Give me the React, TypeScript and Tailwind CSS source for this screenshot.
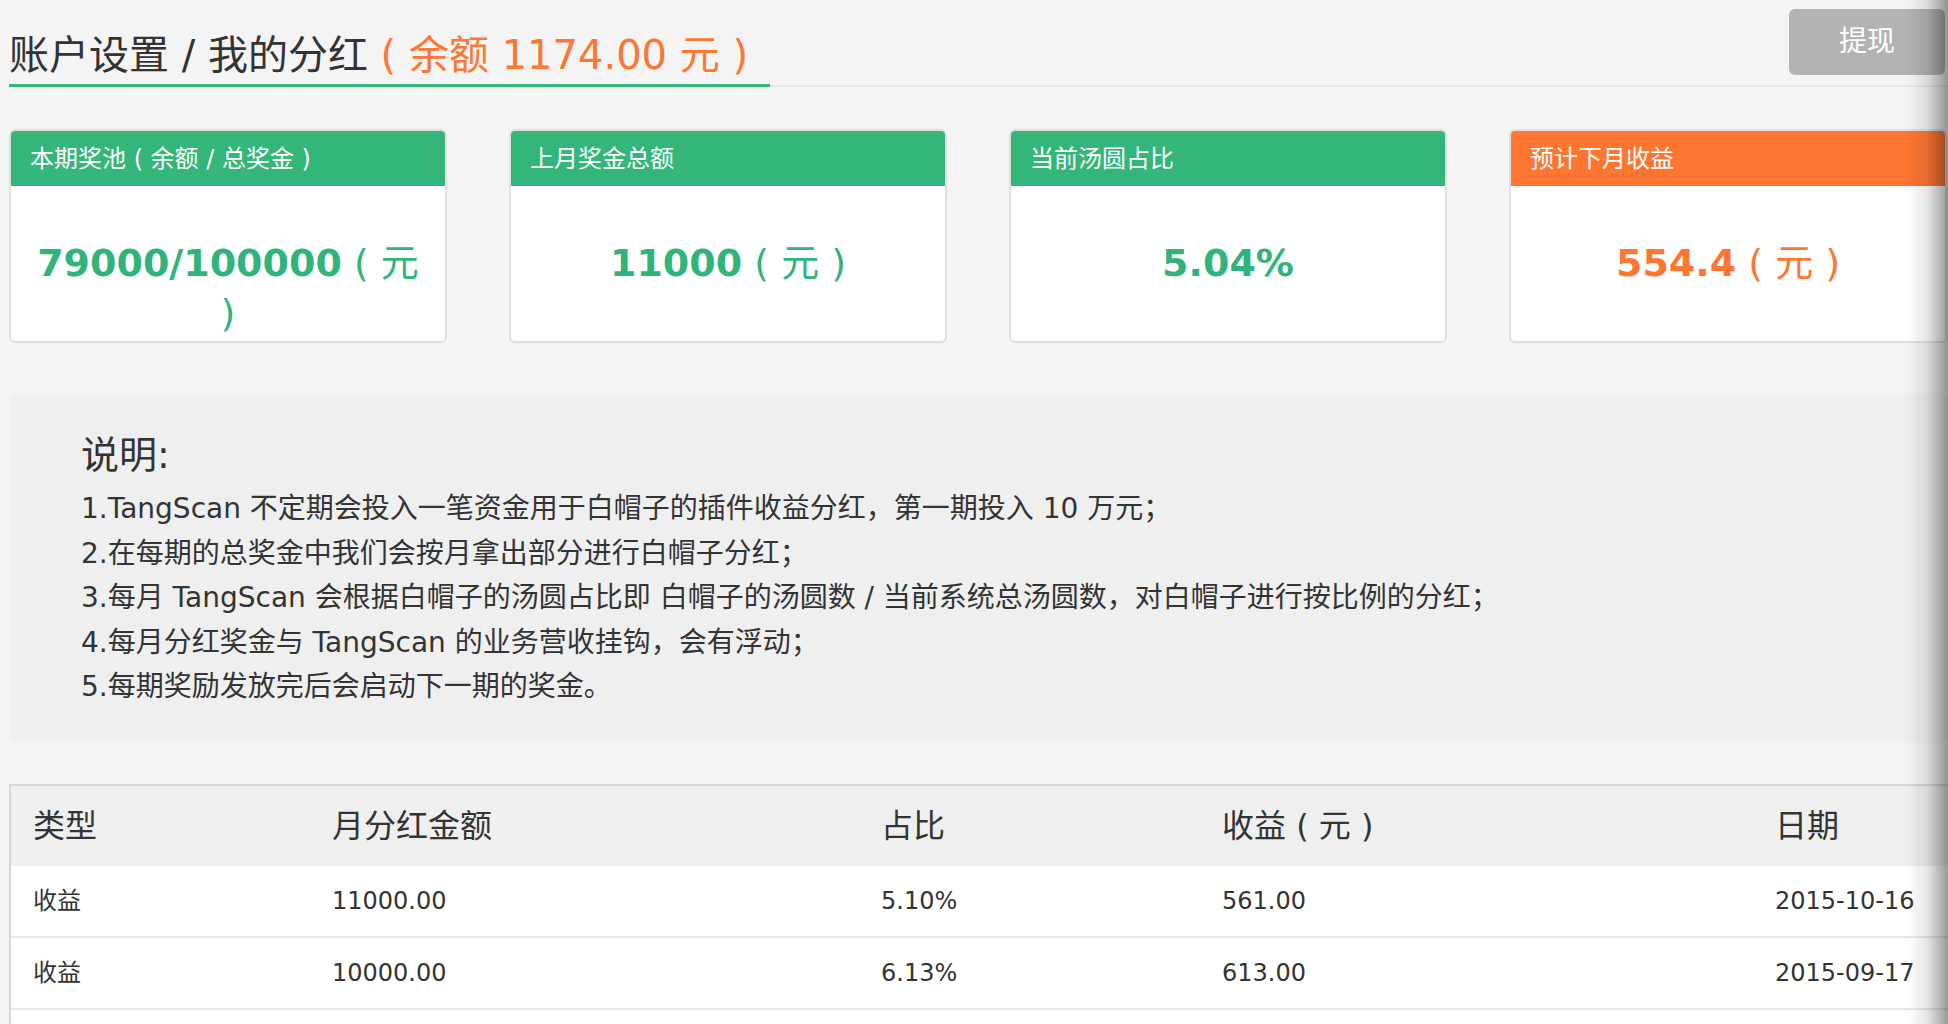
import React from "react";

const FONT = '"DejaVu Sans", "Noto Sans CJK SC", sans-serif';

type Stat = { title: string; value: string; unit?: boolean; tone: "green" | "orange" };

const stats: Stat[] = [
	{ title: "本期奖池 ( 余额 / 总奖金 )", value: "79000/100000", unit: true, tone: "green" },
	{ title: "上月奖金总额", value: "11000", unit: true, tone: "green" },
	{ title: "当前汤圆占比", value: "5.04%", tone: "green" },
	{ title: "预计下月收益", value: "554.4", unit: true, tone: "orange" },
];

const notes = [
	"1.TangScan 不定期会投入一笔资金用于白帽子的插件收益分红，第一期投入 10 万元；",
	"2.在每期的总奖金中我们会按月拿出部分进行白帽子分红；",
	"3.每月 TangScan 会根据白帽子的汤圆占比即 白帽子的汤圆数 / 当前系统总汤圆数，对白帽子进行按比例的分红；",
	"4.每月分红奖金与 TangScan 的业务营收挂钩，会有浮动；",
	"5.每期奖励发放完后会启动下一期的奖金。",
];

const rows = [
	{ type: "收益", amount: "11000.00", ratio: "5.10%", income: "561.00", date: "2015-10-16" },
	{ type: "收益", amount: "10000.00", ratio: "6.13%", income: "613.00", date: "2015-09-17" },
];

const gridCols = "grid grid-cols-[299px_549px_341px_553px_1fr]";

function StatCard({ title, value, unit, tone }: Stat) {
	const isGreen = tone === "green";
	return (
		<div className="w-[438px] h-[214px] shrink-0 rounded-[6px] border-2 border-[#e0e0e0] bg-white overflow-hidden">
			<div
				className={
					"h-[55px] flex items-center pl-[19px] text-[24px] text-white whitespace-pre " +
					(isGreen ? "bg-[#34b67b]" : "bg-[#fe7632]")
				}
			>
				{title}
			</div>
			<div
				className={
					"pt-[52px] px-[16px] text-center text-[38px] leading-[50px] font-bold " +
					(isGreen ? "text-[#31b47a]" : "text-[#fe7632]")
				}
			>
				{value}
				{unit && <span className="font-normal"> ( 元 )</span>}
			</div>
		</div>
	);
}

export default function App() {
	return (
		<div
			className="relative w-full min-h-screen bg-[#f4f4f4] text-[#333] overflow-hidden"
			style={{ fontFamily: FONT }}
		>
			<div className="pl-[9px]">
				{/* header */}
				<div className="flex items-start justify-between border-b-2 border-[#e6e6e6]">
					<h1 className="w-[761px] whitespace-nowrap pt-[30px] pb-[4px] -mb-[2px] border-b-[3px] border-[#35b67c] text-[40px] leading-[50px] font-normal">
						账户设置 / 我的分红
						<span className="text-[#fe7632]"> ( 余额 1174.00 元 )</span>
					</h1>
					<button className="mt-[9px] mr-[3px] w-[156px] h-[66px] rounded-[6px] bg-[#b3b3b3] text-white text-[28px]">
						提现
					</button>
				</div>

				{/* stat cards */}
				<div className="mt-[42px] flex gap-[62px]">
					{stats.map((s) => (
						<StatCard key={s.title} {...s} />
					))}
				</div>

				{/* notes */}
				<div className="mt-[50px] h-[350px] rounded-[6px] bg-[#efefef] pl-[72px] pt-[37px]">
					<h2 className="text-[38px] leading-[50px] font-normal">说明:</h2>
					<div className="mt-[7px] text-[28px] leading-[44.5px]">
						{notes.map((n) => (
							<p key={n}>{n}</p>
						))}
					</div>
				</div>

				{/* table */}
				<div className="mt-[41px] border-t-2 border-l-2 border-[#d6d6d6] bg-white pb-[40px]">
					<div className={gridCols + " h-[80px] items-center bg-[#efefef] text-[32px]"}>
						<div className="pl-[22px]">类型</div>
						<div className="pl-[22px]">月分红金额</div>
						<div className="pl-[22px]">占比</div>
						<div className="pl-[22px] whitespace-pre">收益 ( 元 )</div>
						<div className="pl-[22px]">日期</div>
					</div>
					{rows.map((r) => (
						<div
							key={r.date}
							className={gridCols + " h-[72px] items-center border-b-2 border-[#e8e8e8] text-[24px]"}
						>
							<div className="pl-[22px]">{r.type}</div>
							<div className="pl-[22px]">{r.amount}</div>
							<div className="pl-[22px]">{r.ratio}</div>
							<div className="pl-[22px]">{r.income}</div>
							<div className="pl-[22px]">{r.date}</div>
						</div>
					))}
				</div>
			</div>

			{/* scroll shadow on the right edge */}
			<div className="pointer-events-none absolute right-0 top-0 h-full w-[42px] bg-gradient-to-r from-black/0 via-black/10 to-black/40" />
		</div>
	);
}
